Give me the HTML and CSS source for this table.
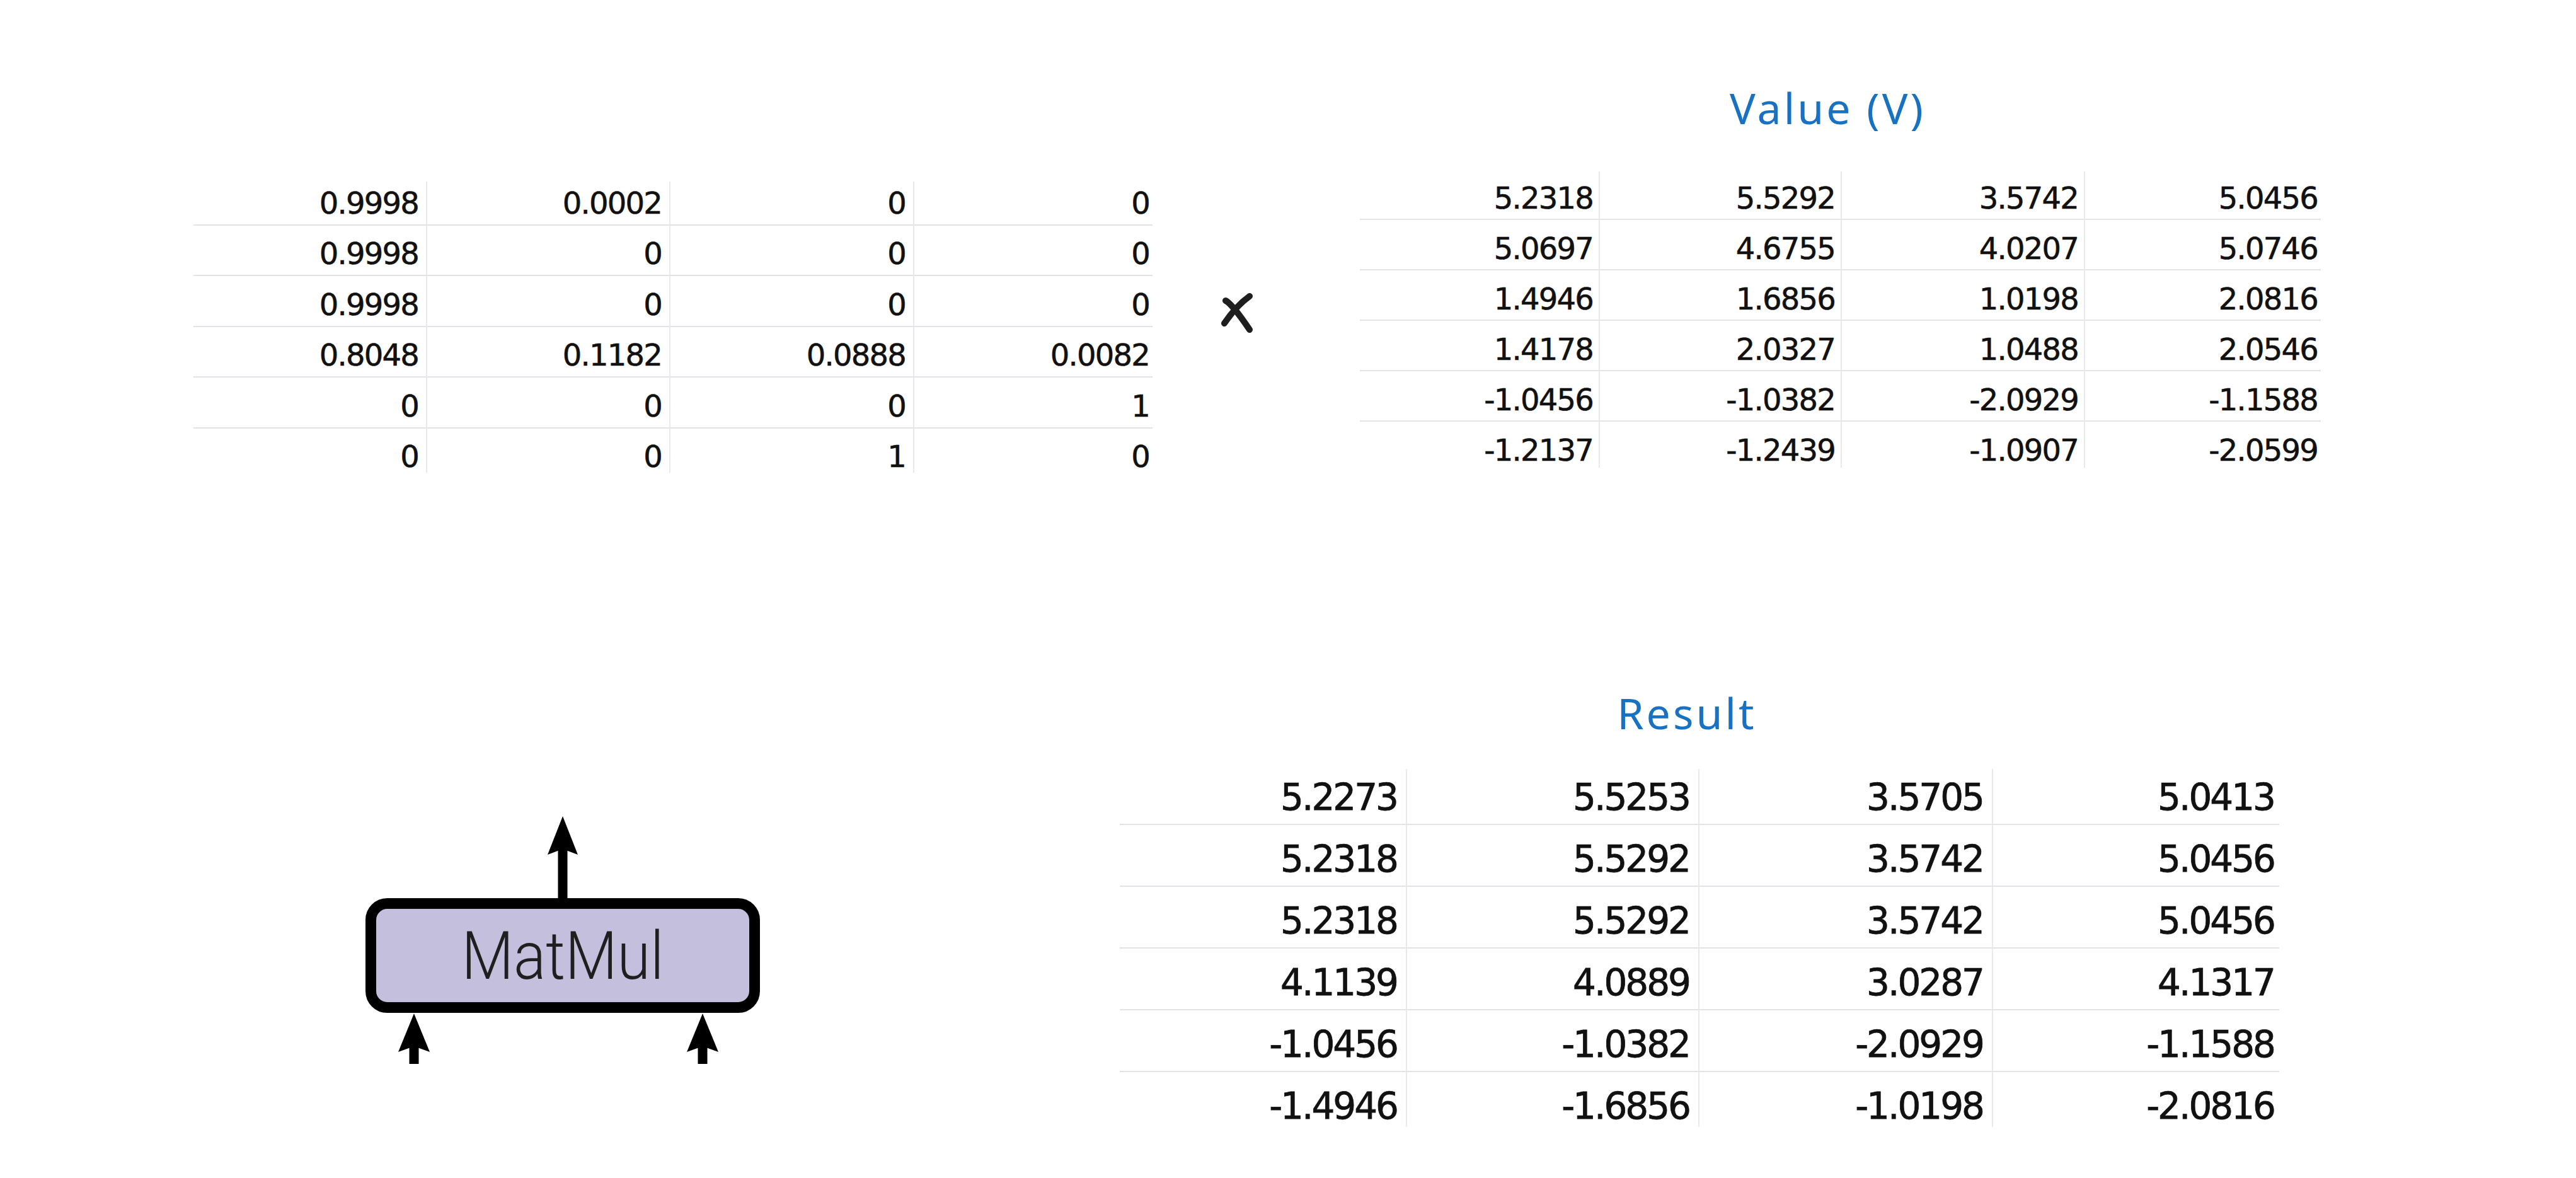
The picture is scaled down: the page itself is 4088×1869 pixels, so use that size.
FILE: index.html
```html
<!DOCTYPE html>
<html lang="en">
<head>
<meta charset="utf-8">
<title>MatMul attention x Value</title>
<link rel="stylesheet" href="styles.css">
</head>
<body>
<div class="canvas">
  <section class="row-top">
    <div class="tbl t1">
      <div class="c">0.9998</div><div class="c">0.0002</div><div class="c">0</div><div class="c">0</div>
      <div class="c">0.9998</div><div class="c">0</div><div class="c">0</div><div class="c">0</div>
      <div class="c">0.9998</div><div class="c">0</div><div class="c">0</div><div class="c">0</div>
      <div class="c">0.8048</div><div class="c">0.1182</div><div class="c">0.0888</div><div class="c">0.0082</div>
      <div class="c">0</div><div class="c">0</div><div class="c">0</div><div class="c">1</div>
      <div class="c">0</div><div class="c">0</div><div class="c">1</div><div class="c">0</div>
    </div>

    <svg class="times" width="60" height="72" viewBox="0 0 60 72" aria-label="times">
      <path d="M11 16 Q22 22 49 62"/>
      <path d="M49 9 Q28 24 9 52"/>
    </svg>

    <div class="block vblock">
      <div class="title">Value (V)</div>
      <div class="tbl t2">
        <div class="c">5.2318</div><div class="c">5.5292</div><div class="c">3.5742</div><div class="c">5.0456</div>
        <div class="c">5.0697</div><div class="c">4.6755</div><div class="c">4.0207</div><div class="c">5.0746</div>
        <div class="c">1.4946</div><div class="c">1.6856</div><div class="c">1.0198</div><div class="c">2.0816</div>
        <div class="c">1.4178</div><div class="c">2.0327</div><div class="c">1.0488</div><div class="c">2.0546</div>
        <div class="c">-1.0456</div><div class="c">-1.0382</div><div class="c">-2.0929</div><div class="c">-1.1588</div>
        <div class="c">-1.2137</div><div class="c">-1.2439</div><div class="c">-1.0907</div><div class="c">-2.0599</div>
      </div>
    </div>
  </section>

  <section class="row-bottom">
    <svg class="matmul" width="645" height="398" viewBox="0 0 645 398">
      <rect class="box" x="18.5" y="143.5" width="609" height="165" rx="26" ry="26"/>
      <text class="mm-label" x="323" y="263" text-anchor="middle" textLength="321" lengthAdjust="spacingAndGlyphs">MatMul</text>
      <rect class="shaft" x="315.5" y="54" width="15" height="84"/>
      <polygon class="head" points="323,5 347,66 323,57 299,66"/>
      <rect class="shaft" x="79.5" y="368" width="15" height="30"/>
      <polygon class="head" points="87,318 112,379 87,370 62,379"/>
      <rect class="shaft" x="537.5" y="368" width="15" height="30"/>
      <polygon class="head" points="545,318 570,379 545,370 520,379"/>
    </svg>

    <div class="block rblock">
      <div class="title">Result</div>
      <div class="tbl t3">
        <div class="c">5.2273</div><div class="c">5.5253</div><div class="c">3.5705</div><div class="c">5.0413</div>
        <div class="c">5.2318</div><div class="c">5.5292</div><div class="c">3.5742</div><div class="c">5.0456</div>
        <div class="c">5.2318</div><div class="c">5.5292</div><div class="c">3.5742</div><div class="c">5.0456</div>
        <div class="c">4.1139</div><div class="c">4.0889</div><div class="c">3.0287</div><div class="c">4.1317</div>
        <div class="c">-1.0456</div><div class="c">-1.0382</div><div class="c">-2.0929</div><div class="c">-1.1588</div>
        <div class="c">-1.4946</div><div class="c">-1.6856</div><div class="c">-1.0198</div><div class="c">-2.0816</div>
      </div>
    </div>
  </section>
</div>
</body>
</html>
```

FILE: styles.css
```css
html, body {
  margin: 0;
  padding: 0;
  background: #ffffff;
}

.canvas {
  width: 4088px;
  height: 1869px;
  display: flex;
  flex-direction: column;
  overflow: hidden;
}

.row-top {
  display: flex;
  align-items: flex-start;
}

.row-bottom {
  display: flex;
  align-items: flex-start;
  margin-top: 339px;
}

/* ---------- tables ---------- */
.tbl {
  display: grid;
  font-family: "DejaVu Sans", "Liberation Sans", sans-serif;
  color: #111111;
  -webkit-text-stroke: 0.6px #111111;
  --rowh: 80.5px;
  --pt: 16.5px;
  --mt1: 13px;
  --pt1: 5.5px;
  --mb: 8px;
  --pr: 12px;
  --pr4: 5px;
}

.c {
  box-sizing: border-box;
  height: var(--rowh);
  padding-top: var(--pt);
  padding-right: var(--pr);
  text-align: right;
  white-space: nowrap;
  border-top: 2px solid #e2e2e7;
}

.c:not(:nth-child(4n+1)) {
  border-left: 2px solid #e9e9ed;
}

.c:nth-child(4n) {
  padding-right: var(--pr4);
}

.c:nth-child(-n+4) {
  border-top: 0;
  margin-top: var(--mt1);
  height: calc(var(--rowh) - var(--mt1));
  padding-top: var(--pt1);
}

.c:nth-last-child(-n+4) {
  margin-bottom: var(--mb);
  height: calc(var(--rowh) - var(--mb));
}

.t1 {
  grid-template-columns: 369px 386px 387px 380px;
  font-size: 48px;
  line-height: 56px;
  letter-spacing: -1.8px;
  margin: 275px 0 0 307px;
}

.t2 {
  grid-template-columns: 379px 384px 386px 376px;
  font-size: 48px;
  line-height: 56px;
  letter-spacing: -1.8px;
  margin-top: 62px;
  --rowh: 80px;
  --pt: 16.5px;
  --mt1: 5px;
  --pt1: 13.5px;
  --mb: 5px;
  --pr: 9px;
  --pr4: 5px;
}

.t3 {
  grid-template-columns: 454px 464px 466px 456px;
  font-size: 58px;
  line-height: 67.5px;
  letter-spacing: -3px;
  -webkit-text-stroke: 0.8px #111111;
  margin-top: 43.5px;
  --rowh: 98px;
  --pt: 21.3px;
  --mt1: 11.5px;
  --pt1: 11.8px;
  --mb: 9px;
  --pr: 14px;
  --pr4: 8px;
}

/* ---------- titles ---------- */
.block {
  display: flex;
  flex-direction: column;
}

.title {
  font-family: "Noto Sans", "Liberation Sans", sans-serif;
  font-size: 68px;
  line-height: 68px;
  letter-spacing: 4px;
  color: #1971c2;
  text-align: center;
  padding-right: 40px;
}

.vblock {
  margin-left: 164px;
  margin-top: 137px;
}

.rblock {
  margin-left: 562px;
}

/* ---------- multiply sign ---------- */
.times {
  flex: none;
  margin-top: 461px;
  margin-left: 105px;
}

.times path {
  fill: none;
  stroke: #1e1e1e;
  stroke-width: 10;
  stroke-linecap: round;
  stroke-linejoin: round;
}

/* ---------- MatMul diagram ---------- */
.matmul {
  flex: none;
  margin-top: 193px;
  margin-left: 570px;
}

.matmul .box {
  fill: #c4bfdd;
  stroke: #000000;
  stroke-width: 17;
}

.matmul .mm-label {
  font-family: Roboto, "Liberation Sans", sans-serif;
  font-weight: 300;
  font-size: 105px;
  fill: #1f1f1f;
}

.matmul .shaft,
.matmul .head {
  fill: #000000;
}
```
